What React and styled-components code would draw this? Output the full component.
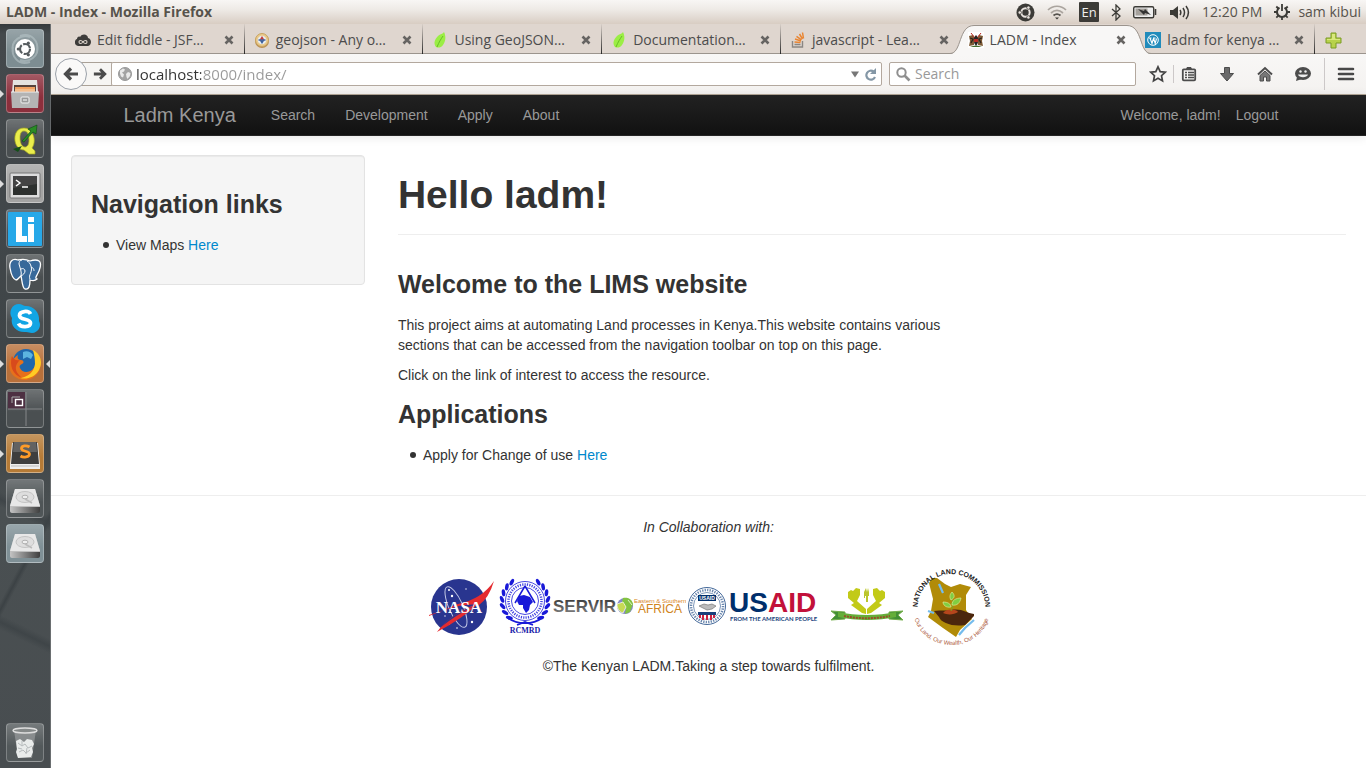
import React from "react";
import styled, { createGlobalStyle, css } from "styled-components";

const GlobalStyle = createGlobalStyle`
  * { box-sizing: border-box; }
  html, body, #root { height: 100%; }
  body {
    margin: 0;
    background: #fff;
    color: #333;
    font-family: "Liberation Sans", Arial, sans-serif;
    font-size: 14px;
    line-height: 20px;
  }
  button { border: 0; padding: 0; background: none; font: inherit; color: inherit; cursor: pointer; }
  svg { display: block; flex: none; }
`;

const uiFont = css`
  font-family: "Open Sans", "Noto Sans", sans-serif;
  font-size: 14px;
`;

/* ---------- desktop shell ---------- */

const Desktop = styled.div`
  min-height: 100%;
  display: flex;
  flex-direction: column;
`;

const Panel = styled.header`
  ${uiFont}
  height: 24px;
  flex: none;
  display: flex;
  align-items: center;
  justify-content: space-between;
  padding: 0 5px 0 6px;
  color: #57534c;
  background: linear-gradient(#f8f6f4, #eeeae6 40%, #d8cdc3);
`;

const WindowTitle = styled.span`
  font-weight: 700;
`;

const Indicators = styled.div`
  display: flex;
  align-items: center;
  gap: 12px;
`;

const Indicator = styled.button`
  display: flex;
  align-items: center;
  gap: 8px;
  white-space: nowrap;
`;

const Language = styled.span`
  width: 20px;
  height: 20px;
  border-radius: 1px;
  background: #3c3b37;
  color: #f2f0ee;
  font-size: 13px;
  line-height: 20px;
  text-align: center;
`;

const Workspace = styled.div`
  flex: 1;
  display: flex;
`;

const Launcher = styled.nav`
  width: 51px;
  flex: none;
  display: flex;
  flex-direction: column;
  gap: 6px;
  padding: 5px 6px;
  border-right: 1px solid #6a6e70;
  background:
    linear-gradient(118deg, transparent 69%, #3c4245 70%, transparent 71%),
    linear-gradient(26deg, transparent 18%, #3f4548 19%, transparent 20%, transparent 34%, #3f4548 35%, transparent 36%),
    linear-gradient(#34393b, #44494c 10px, #3e4447 55%, #4a5052 65%, #484d50);
`;

const Tile = styled.button`
  position: relative;
  width: 38px;
  height: 39px;
  flex: none;
  margin-top: ${(p) => (p.$last ? "auto" : "0")};
  border: 1px solid rgba(255, 255, 255, 0.25);
  border-radius: 4px;
  background: linear-gradient(rgba(255, 255, 255, 0.2), transparent 60%), ${(p) => p.$color};
  display: grid;
  place-items: center;
  &:last-child { margin-bottom: 1px; }
`;

const Pip = styled.span`
  position: absolute;
  top: 15px;
  ${(p) => (p.$right ? "right: -7px; border-right: 4px solid #ddd;" : "left: -7px; border-left: 4px solid #ddd;")}
  border-top: 4px solid transparent;
  border-bottom: 4px solid transparent;
`;

/* ---------- browser chrome ---------- */

const Browser = styled.div`
  flex: 1;
  min-width: 0;
  display: flex;
  flex-direction: column;
`;

const TabStrip = styled.div`
  ${uiFont}
  height: 30px;
  display: flex;
  padding-left: 15px;
  background: #dfd6cf;
  box-shadow: inset 0 -1px #9b948d;
  color: #4c4c4c;
`;

const Tab = styled.div`
  position: relative;
  flex: 1;
  min-width: 0;
  display: flex;
  align-items: center;
  padding: 2px 10px 0 9px;
  gap: 6px;
  ${(p) => !p.$active && !p.$beforeActive && css`
    border-right: 1px solid;
    border-image: linear-gradient(#dfd6cf, #222) 1;
  `}
`;

const TabLabel = styled.button`
  position: relative;
  flex: 1;
  min-width: 0;
  display: flex;
  align-items: center;
  gap: 6px;
  text-align: left;
  white-space: nowrap;
`;

const CloseButton = styled.button`
  position: relative;
  width: 10px;
  height: 10px;
  flex: none;
`;

const TabShape = styled.div`
  position: absolute;
  inset: 1px -15px 0 -9px;
  display: flex;
`;

const TabTop = styled.div`
  flex: 1;
  background: #f8f7f6;
  border-top: 1px solid #9b948d;
`;

const NewTab = styled.button`
  width: 51px;
  padding: 2px 0 0 10px;
`;

const Toolbar = styled.div`
  ${uiFont}
  height: 41px;
  display: flex;
  align-items: center;
  padding: 0 11px 0 4px;
  background: linear-gradient(#f8f7f6, #f4f2f0);
  border-bottom: 1px solid #b3a797;
`;

const BackButton = styled.button`
  position: relative;
  width: 32px;
  height: 32px;
  flex: none;
  display: grid;
  place-items: center;
  border: 1px solid #9ba1a9;
  border-radius: 50%;
  background: #faf9f8;
`;

const ForwardButton = styled.button`
  width: 32px;
  height: 24px;
  flex: none;
  margin-left: -7px;
  padding-left: 12px;
  border: 1px solid #aaa197;
  border-right: 0;
  background: #f6f5f3;
`;

const Field = styled.label`
  height: 24px;
  display: flex;
  align-items: center;
  gap: 4px;
  padding: 0 4px 0 6px;
  border: 1px solid #b3a89e;
  border-radius: 2px;
  background: #fff;
  ${(p) => (p.$wide ? "flex: 1; margin-left: -1px;" : "width: 247px; margin: 0 13px 0 7px;")}
`;

const TextInput = styled.input`
  flex: 1;
  min-width: 0;
  border: 0;
  padding: 0;
  outline: 0;
  background: transparent;
  font: inherit;
  color: #888;
  &::placeholder { color: #999; opacity: 1; }
`;

const AddressInput = styled(TextInput)`
  font-size: 15px;
  background: linear-gradient(to right, #333 65px, #999 65px);
  background-clip: text;
  -webkit-background-clip: text;
  color: transparent;
`;

const Tools = styled.div`
  display: flex;
  align-items: center;
  gap: 20px;
`;

const ToolButton = styled.button`
  width: 18px;
  height: 18px;
  display: grid;
  place-items: center;
`;

const Divider = styled.span`
  width: 1px;
  height: ${(p) => (p.$tall ? "32px" : "18px")};
  margin: 0 ${(p) => (p.$tall ? "-8px" : "-14px")};
  background: #ccc8c8;
`;

/* ---------- web page ---------- */

const Page = styled.div`
  flex: 1;
  background: #fff;
`;

const Navbar = styled.nav`
  height: 41px;
  border-bottom: 1px solid #252525;
  background: linear-gradient(#222, #111);
  box-shadow: 0 1px 10px rgba(0, 0, 0, 0.1);
`;

const NavInner = styled.div`
  max-width: 1170px;
  height: 40px;
  margin: 0 auto;
  display: flex;
  align-items: center;
`;

const NavLink = styled.a`
  padding: 0 15px;
  color: #999;
  text-decoration: none;
`;

const Brand = styled(NavLink)`
  padding: 0 20px 0 0;
  font-size: 20px;
`;

const Account = styled.div`
  margin-left: auto;
  display: flex;
  color: #999;
`;

const Columns = styled.div`
  display: grid;
  grid-template-columns: 31fr 100fr;
  gap: 33px;
  align-items: start;
  padding: 19px 20px 0;
`;

const Well = styled.aside`
  padding: 19px;
  border: 1px solid #e3e3e3;
  border-radius: 4px;
  background: #f5f5f5;
  box-shadow: inset 0 1px 1px rgba(0, 0, 0, 0.05);
`;

const Main = styled.main`
  padding-top: 20px;
`;

const PageHeader = styled.header`
  padding-bottom: 19px;
  border-bottom: 1px solid #eee;
  margin-bottom: 30px;
`;

const Title = styled.h1`
  margin: 0;
  font-size: 39px;
  line-height: 40px;
`;

const Heading = styled.h2`
  margin: 10px 0 12px;
  font-size: 25px;
  line-height: 38px;
`;

const Copy = styled.p`
  max-width: 60%;
  margin: 0 0 10px;
`;

const List = styled.ul`
  margin: 0 0 10px 12px;
  padding: 0;
  list-style: none;
`;

const ListItem = styled.li`
  display: flex;
  align-items: center;
  gap: 7px;
  &::before {
    content: "";
    width: 6px;
    height: 6px;
    border-radius: 50%;
    background: #333;
  }
`;

const Link = styled.a`
  color: #08c;
  text-decoration: none;
`;

const Footer = styled.footer`
  margin-top: 20px;
  padding-top: 21px;
  border-top: 1px solid #eee;
  text-align: center;
`;

const Partners = styled.p`
  margin: 0 0 30px;
  font-style: italic;
`;

const Logos = styled.div`
  display: flex;
  justify-content: center;
  margin-bottom: 9px;
`;

const Copyright = styled.p`
  margin: 0;
`;

/* ---------- icons ---------- */

const DashIcon = () => (
  <svg width="34" height="34" viewBox="0 0 34 34">
    <g fill="none" stroke="#b8c4c8" strokeWidth="2" opacity=".6">
      <path d="M5 20C2 8 14 2 22 5M12 4c12-4 19 6 17 15M29 13c3 12-9 18-17 15M22 30C10 34 3 24 5 15" />
    </g>
    <circle cx="17" cy="17" r="10" fill="#fff" />
    <circle cx="17" cy="17" r="5" fill="none" stroke="#555b5e" strokeWidth="2.2" strokeDasharray="9 1.5" />
    <circle cx="10.300" cy="17" r="1.600" fill="#555b5e" />
    <circle cx="20.300" cy="11.200" r="1.600" fill="#555b5e" />
    <circle cx="20.300" cy="22.800" r="1.600" fill="#555b5e" />
  </svg>
);

const FilesIcon = () => (
  <svg width="34" height="34" viewBox="0 0 34 34">
    <path d="M5 3h24l1 12H4z" fill="#e4e2e0" />
    <path d="M6 8h22v8H6z" fill="#55423b" />
    <path d="M7 10h20v6H7z" fill="#f0a162" />
    <path d="M7 13h20" stroke="#f9d9b2" />
    <path d="M3 15h28l-1 16H4z" fill="#b4b4b4" />
    <path d="M3 15h28" stroke="#eee" />
    <rect x="13" y="20" width="8" height="6" rx="1" fill="#999" stroke="#f2f2f2" />
    <path d="M15 23h4" stroke="#fff" />
  </svg>
);

const QgisIcon = () => (
  <svg width="34" height="34" viewBox="0 0 34 34">
    <path fillRule="evenodd" d="M16 6c-7 0-10 6-9 13 1 6 5 9 9 9l5 4h6v-3l-3-3c3-4 3-11 0-15-2-3-4-5-8-5zm0 3c4 0 5 5 5 9 0 5-2 7-4 7-3 0-5-4-5-9 0-4 1-7 4-7z" fill="#eaed4c" stroke="#a6aa20" strokeWidth=".7" />
    <path d="M14 19l9-10-3-2 9-4-1 9-3-2-9 10z" fill="#2a8c26" stroke="#0d4b12" strokeWidth=".6" />
    <path d="M5 27l9-3-4 6z" fill="#145018" />
  </svg>
);

const TerminalIcon = () => (
  <svg width="34" height="34" viewBox="0 0 34 34">
    <rect x="2" y="6" width="30" height="25" rx="1" fill="#ddd" stroke="#777" />
    <rect x="5" y="9" width="24" height="19" fill="#2d302e" />
    <path d="M5 9h24v8L5 21z" fill="#444" />
    <path d="M8 13l4 3-4 3M14 20h6" fill="none" stroke="#fff" strokeWidth="1.500" />
  </svg>
);

const LiIcon = () => (
  <svg width="34" height="34" viewBox="0 0 34 34">
    <rect width="34" height="34" rx="1" fill="#27a8e8" />
    <path d="M8 5h6v19h5v6H8zM20 12h6v18h-6zM20 5h6v5h-6z" fill="#fff" />
  </svg>
);

const PostgresIcon = () => (
  <svg width="34" height="34" viewBox="0 0 34 34">
    <path d="M10 3C4 1 1 5 2 11c1 6 3 11 6 12 2 0 3-3 5-4 1 3 1 12 4 13 4 1 5-3 5-9 3 1 6 0 7-1-2-1-1-2 0-4 3-5 5-12 2-14-3-2-6-1-9 0-4-2-8-2-12-1z" fill="#38699a" stroke="#fff" strokeWidth="1.300" />
    <path d="M13 19c1-4-1-8-2-12 0-2 1-4 3-4M22 22c-2-4 3-7 1-13-1-3-2-4-4-5M13 12c2-1 4 0 4 2s-2 4-4 5M23 11c2-1 3 1 3 3" fill="none" stroke="#fff" />
  </svg>
);

const SkypeIcon = () => (
  <svg width="34" height="34" viewBox="0 0 34 34">
    <path d="M11 2c3 0 4 2 7 2 8 0 14 7 13 15 3 5-1 12-7 12-3 0-3-1-6-1C9 31 2 24 4 16 0 10 4 2 11 2z" fill="#12a5e4" />
    <path d="M22.500 12c-2-4-11-3-11 1.500 0 5 11 2.500 11 7.500 0 4.500-10 5-12 .5" fill="none" stroke="#fff" strokeWidth="3.800" />
  </svg>
);

const FirefoxIcon = () => (
  <svg width="34" height="34" viewBox="0 0 34 34">
    <circle cx="18" cy="15" r="13" fill="#1f67ac" />
    <path d="M15 5c4-2 8 0 10 3l-2 4-4-2-4 2z" fill="#5cb4df" />
    <path d="M27 6c6 6 7 14 3 20-5 7-14 9-21 5-8-4-10-14-5-22l1 4c1-2 3-4 5-5-1 3 0 5 3 5 2 0 4 2 1 4-2 1-3 2-2 4 2 5 9 5 13 1 4-4 4-10 2-16z" fill="#e6701b" />
    <path d="M25 3c8 4 10 13 6 20-4 7-12 10-19 8 8-1 14-6 15-14 0-6-1-10-2-14z" fill="#ffcb24" />
    <path d="M4 9c-3 10 1 19 10 22-4-4-7-7-6-12 1-3 2-4 4-6-4 1-7-1-8-4z" fill="#d84a1c" />
  </svg>
);

const WorkspaceIcon = () => (
  <svg width="36" height="37" viewBox="0 0 36 37">
    <path d="M1 2h17v17H1z" fill="#4d3042" />
    <path d="M19 2v34M1 19h34" stroke="#85888a" />
    <path d="M5 13V7h8" fill="none" stroke="#aaa" />
    <rect x="8.500" y="9.500" width="7" height="6" fill="none" stroke="#fff" strokeWidth="1.400" />
  </svg>
);

const SublimeIcon = () => (
  <svg width="34" height="34" viewBox="0 0 34 34">
    <path d="M4 6h26l2 22v4H2v-4z" fill="#eee" />
    <path d="M5 5h24l2 22H3z" fill="#3e3e3e" />
    <path d="M6 5h22l1 10H5z" fill="#626262" />
    <path d="M3 29h28" stroke="#bbb" />
    <path d="M21.500 10c-3-2-8-1.500-8 1.500 0 3.500 8 2 8 5.500 0 3-6 4-9 2" fill="none" stroke="#ff9b28" strokeWidth="2.800" />
  </svg>
);

const DiskIcon = () => (
  <svg width="34" height="34" viewBox="0 0 34 34">
    <defs>
      <linearGradient id="disk-front"><stop stopColor="#c4c4c4" /><stop offset="1" stopColor="#3f3f3f" /></linearGradient>
    </defs>
    <path d="M7 7h20l5 17v5H2v-5z" fill="#bfbfbf" />
    <path d="M7 7h20l5 17H2z" fill="#e8e8e8" />
    <path d="M2 25h30v4c0 1-1 2-2 2H4c-1 0-2-1-2-2z" fill="url(#disk-front)" />
    <ellipse cx="17" cy="15" rx="9" ry="5.500" fill="#dedede" stroke="#c4c4c4" />
    <ellipse cx="17" cy="15" rx="3" ry="1.800" fill="#efefef" stroke="#b0b0b0" />
    <path d="M17 17l7 4" stroke="#bbb" strokeWidth="1.500" />
  </svg>
);

const TrashIcon = () => (
  <svg width="34" height="34" viewBox="0 0 34 34">
    <path d="M6 4h22l-4 28H10z" fill="#9ca0a1" opacity=".65" />
    <ellipse cx="17" cy="4.500" rx="12" ry="2.500" fill="#858989" stroke="#ddd" strokeWidth="1.400" />
    <path d="M8 15l4-2 4 3 3-3 5 1 2 4-2 4 1 4-2 5-13 1-2-6 1-3z" fill="#e9eceb" />
    <path d="M10 17l4 3 3-2 3 4 4-2M11 26l4-2 3 3 4-3M14 15v4M19 22l-1 6M10 22l4 1" stroke="#b5babb" fill="none" />
  </svg>
);

const apps = [
  { name: "Dash", Icon: DashIcon, color: "#7d8d92" },
  { name: "Files", Icon: FilesIcon, color: "#8c2f3c", open: true },
  { name: "QGIS", Icon: QgisIcon, color: "#4a4f51" },
  { name: "Terminal", Icon: TerminalIcon, color: "#a3a3a2", open: true },
  { name: "LibreCAD", Icon: LiIcon, color: "#46525a" },
  { name: "pgAdmin", Icon: PostgresIcon, color: "#4a4f51" },
  { name: "Skype", Icon: SkypeIcon, color: "#4a4f51" },
  { name: "Firefox", Icon: FirefoxIcon, color: "#b8703a", open: true, focused: true },
  { name: "Workspace Switcher", Icon: WorkspaceIcon, color: "#4a4f51" },
  { name: "Sublime Text", Icon: SublimeIcon, color: "#b67b36", open: true },
  { name: "Disk 1", Icon: DiskIcon, color: "#4f5557" },
  { name: "Disk 2", Icon: DiskIcon, color: "#7f9096" },
  { name: "Trash", Icon: TrashIcon, color: "#53595b", last: true },
];

const FriendsIcon = () => (
  <svg width="19" height="19" viewBox="0 0 19 19">
    <circle cx="9.500" cy="9.500" r="9" fill="#3c3b37" />
    <circle cx="9.500" cy="9.500" r="4.200" fill="none" stroke="#e9e4df" strokeWidth="2" />
    <g fill="#e9e4df" stroke="#3c3b37" strokeWidth=".7"><circle cx="3.800" cy="9.500" r="1.700" /><circle cx="12.400" cy="4.600" r="1.700" /><circle cx="12.400" cy="14.400" r="1.700" /></g>
  </svg>
);

const WifiIcon = () => (
  <svg width="20" height="16" viewBox="0 0 20 16" fill="none" strokeWidth="1.700">
    <path d="M1 6c5-5 13-5 18 0M4 9c4-3.500 8-3.500 12 0" stroke="#aaa49e" />
    <path d="M6.500 11.500c2-1.700 5-1.700 7 0" stroke="#55524d" />
    <path d="M8 13.500h4l-2 2z" fill="#3c3b37" />
  </svg>
);

const BluetoothIcon = () => (
  <svg width="10" height="17" viewBox="0 0 10 17"><path d="M1 5l8 7-4 4V1l4 4-8 7" fill="none" stroke="#3c3b37" strokeWidth="1.300" /></svg>
);

const BatteryIcon = () => (
  <svg width="24" height="14" viewBox="0 0 24 14">
    <rect x=".7" y="1.700" width="20" height="11" rx="1.500" fill="#eee" stroke="#3c3b37" strokeWidth="1.400" />
    <path d="M22.500 4v6" stroke="#3c3b37" strokeWidth="1.600" />
    <path d="M2.500 3.500h12v7h-12z" fill="#a5a19c" />
    <path d="M5 4l6 2 1-2 6 6-6-2-1 2z" fill="#333" />
  </svg>
);

const VolumeIcon = () => (
  <svg width="21" height="15" viewBox="0 0 21 15">
    <path d="M1 5h3l5-4v13l-5-4H1z" fill="#3c3b37" />
    <path d="M11 5c1 1.500 1 3.500 0 5M14 3c2 3 2 6 0 9M17 1c3 4 3 9 0 13" fill="none" stroke="#3c3b37" strokeWidth="1.500" />
  </svg>
);

const PowerGearIcon = () => (
  <svg width="16" height="16" viewBox="0 0 16 16" fill="none" stroke="#3c3b37">
    <path d="M5.500 3.700a5 5 0 1 0 5 0" strokeWidth="2" />
    <path d="M8 0v7M0 8h3M13 8h3M2.300 2.500l2 2M13.700 2.500l-2 2M2.300 13.700l2-2M13.700 13.700l-2-2M8 13v3" strokeWidth="1.800" />
  </svg>
);

const CloseIcon = () => (
  <svg width="10" height="10" viewBox="0 0 10 10"><path d="M1.500 1.500l7 7m0-7l-7 7" stroke="#666462" strokeWidth="2.600" /></svg>
);

const FiddleFavicon = () => (
  <svg width="16" height="16" viewBox="0 0 16 16">
    <path d="M3 14c-4-1-4-6-1-7 0-2 2-3 3-2 2-4 8-3 8 1 4 1 4 7 0 8z" fill="#3d3c3a" />
    <path d="M8 10c-1.500-2-4-2-4 0s2.500 2 4 0c1.500-2 4-2 4 0s-2.500 2-4 0z" fill="none" stroke="#e0d8d0" strokeWidth="1.100" />
  </svg>
);

const CompassFavicon = () => (
  <svg width="16" height="16" viewBox="0 0 16 16">
    <circle cx="8" cy="9" r="7" fill="#b98f52" />
    <circle cx="8" cy="8" r="6.500" fill="#e9c98b" stroke="#c9a462" />
    <circle cx="8" cy="8" r="4.300" fill="#e7edf1" />
    <path d="M8 4l2.500 4h-5z" fill="#c33a3a" /><path d="M8 12l2.500-4h-5z" fill="#3c5f99" />
    <path d="M4.500 8h7" stroke="#4a69a0" strokeWidth="1.500" />
  </svg>
);

const LeafFavicon = () => (
  <svg width="16" height="16" viewBox="0 0 16 16">
    <path d="M12 0c2 4 2 9-1 13-2 3-5 3-7 2C1 11 3 7 6 4c2-2 5-2 6-4z" fill="#9bee45" />
    <path d="M11 4c-2 3-4 6-6 11" fill="none" stroke="#67be25" />
  </svg>
);

const StackFavicon = () => (
  <svg width="16" height="16" viewBox="0 0 16 16" fill="none">
    <path d="M2.500 9v6h10V9" stroke="#8a8683" strokeWidth="1.400" />
    <path d="M4.500 12.500h6" stroke="#8a8683" strokeWidth="1.500" />
    <path d="M4.500 10l6 .6M5 7l6 2M6.500 4.300l5 3.500M9.500 2l3 5M12.500.5l1 6" stroke="#e98532" strokeWidth="1.500" />
  </svg>
);

const KenyaFavicon = () => (
  <svg width="16" height="16" viewBox="0 0 16 16">
    <path d="M0 0h16v16H0z" fill="#fff" />
    <path d="M1 4l4-1 2 4-1 6-5 1 1-5zM15 4l-4-1-2 4 1 6 5 1-1-5z" fill="#7d5a35" />
    <path d="M2 6l3 1-2 4M14 6l-3 1 2 4" stroke="#2b211b" fill="none" strokeWidth="1.200" />
    <path d="M3 1l4 5M13 1L9 6" stroke="#b9271f" />
    <path d="M8 3c3 3 3 7 0 11-3-4-3-8 0-11z" fill="#252525" />
    <path d="M6 7h4v3H6z" fill="#b72a24" />
    <path d="M2 15c4-2 8-2 12 0z" fill="#426c2b" />
  </svg>
);

const WordPressFavicon = () => (
  <svg width="16" height="16" viewBox="0 0 16 16">
    <path d="M0 0h16v16H0z" fill="#218bbb" />
    <circle cx="8" cy="8" r="5.300" fill="none" stroke="#fff" />
    <path d="M4 6h2.500M8 6h2.500M5 6l2 5.500 1.300-4.500M8.500 6l1.700 5.500L11.500 6.500" fill="none" stroke="#fff" strokeWidth="1.100" />
  </svg>
);

const tabs = [
  { title: "Edit fiddle - JSF…", Icon: FiddleFavicon },
  { title: "geojson - Any o…", Icon: CompassFavicon },
  { title: "Using GeoJSON…", Icon: LeafFavicon },
  { title: "Documentation…", Icon: LeafFavicon },
  { title: "javascript - Lea…", Icon: StackFavicon, beforeActive: true },
  { title: "LADM - Index", Icon: KenyaFavicon, active: true },
  { title: "ladm for kenya …", Icon: WordPressFavicon },
];

const ArrowIcon = ({ size, flip }) => (
  <svg width={size} height={size} viewBox="0 0 16 16">
    <path d={flip ? "M1 8h12M8 2.500L13.500 8 8 13.500" : "M15 8H3M8 2.500L2.500 8 8 13.500"} fill="none" stroke="#4b4b4b" strokeWidth="3.200" />
  </svg>
);

const GlobeIcon = () => (
  <svg width="14" height="14" viewBox="0 0 14 14">
    <circle cx="7" cy="7" r="6.500" fill="#a3a3a3" stroke="#999" />
    <path d="M2 3.500l3-2 2 1-1 2-2 1 2 2-1 3-2-1-1-3zM8 7l2-2 2.500 1-.5 3-2.500 3-1-2z" fill="#e9e9e9" />
  </svg>
);

const DropIcon = () => (
  <svg width="10" height="8" viewBox="0 0 10 8"><path d="M1 1.500h8L5 7.500z" fill="#777" /></svg>
);

const ReloadIcon = () => (
  <svg width="13" height="13" viewBox="0 0 13 13">
    <path d="M9.500 3.500A4.500 4.500 0 1 0 11 9" fill="none" stroke="#8497a6" strokeWidth="2.200" />
    <path d="M12 0v6H6z" fill="#8497a6" />
  </svg>
);

const SearchIcon = () => (
  <svg width="15" height="15" viewBox="0 0 15 15" fill="none" stroke="#8f8f8f"><circle cx="5.500" cy="5.500" r="4.200" strokeWidth="2" /><path d="M8.500 8.500l5 5" strokeWidth="2.600" /></svg>
);

const StarIcon = () => (
  <svg width="18" height="18" viewBox="0 0 18 18"><path d="M9 1.800l2.200 4.800 5 .6-3.700 3.500 1 5.200L9 13.300l-4.500 2.600 1-5.200L1.800 7.200l5-.6z" fill="none" stroke="#444" strokeWidth="1.700" /></svg>
);

const BookmarksIcon = () => (
  <svg width="16" height="16" viewBox="0 0 16 16"><rect x="1.800" y="3.300" width="12.400" height="11" rx="1" fill="none" stroke="#4c4c4c" strokeWidth="1.800" /><path d="M5 3l1-2h4l1 2z" fill="#4c4c4c" /><path d="M4 6.500h2M7 6.500h6M4 9h2M7 9h6M4 11.500h2M7 11.500h6" stroke="#4c4c4c" strokeWidth="1.300" /></svg>
);

const DownloadIcon = () => (
  <svg width="16" height="16" viewBox="0 0 16 16"><path d="M5.500 1.500h5v6h4L8 15 1.500 7.500h4z" fill="#6a6a6a" stroke="#4c4c4c" /></svg>
);

const HomeIcon = () => (
  <svg width="16" height="16" viewBox="0 0 16 16"><path d="M1 8.500L8 2l7 6.500" fill="none" stroke="#4c4c4c" strokeWidth="2" /><path d="M3 9.500L8 5l5 4.500V15H9.500v-4h-3v4H3z" fill="#777" stroke="#4c4c4c" /></svg>
);

const HelloIcon = () => (
  <svg width="18" height="16" viewBox="0 0 18 16"><ellipse cx="9" cy="7.500" rx="8" ry="6.500" fill="#4c4c4c" /><path d="M3 11l-1 4 6-2z" fill="#4c4c4c" /><circle cx="6.500" cy="5.500" r="1.200" fill="#eee" /><circle cx="11.500" cy="5.500" r="1.200" fill="#eee" /><path d="M4 8.500h10c-1 3.500-9 3.500-10 0z" fill="#eee" /></svg>
);

const MenuIcon = () => (
  <svg width="18" height="14" viewBox="0 0 18 14"><path d="M2 2h14M2 7h14M2 12h14" stroke="#484848" strokeWidth="2.600" strokeLinecap="round" /></svg>
);

const PlusIcon = () => (
  <svg width="17" height="17" viewBox="0 0 17 17"><path d="M6 1h5v5h5v5h-5v5H6v-5H1V6h5z" fill="#b8d24c" stroke="#7b9b25" /><path d="M7 2h3v5h5v1H2V7h5z" fill="#d9e87e" /></svg>
);

/* ---------- partner logos ---------- */

const NasaLogo = () => (
  <svg width="75" height="80" viewBox="423 567 75 80" role="img" aria-label="NASA">
    <circle cx="459" cy="607" r="28" fill="#29358f" />
    <g fill="#fff"><circle cx="449" cy="590" r="1" /><circle cx="452" cy="596" r="1.200" /><circle cx="466" cy="589" r=".7" /><circle cx="472" cy="622" r="1.200" /><circle cx="449" cy="624" r="1" /><circle cx="457" cy="628" r=".8" /><circle cx="445" cy="616" r=".7" /><circle cx="479" cy="598" r=".7" /></g>
    <ellipse cx="456" cy="607" rx="7" ry="22" transform="rotate(-24 456 607)" fill="none" stroke="#c3c9e6" />
    <path d="M429 615Q444 611 458 604Q482 599 494 581Q489 598 479 605Q462 602 429 616z" fill="#e52b2f" />
    <path d="M437 632Q450 614 479 603Q462 619 437 632z" fill="#e52b2f" />
    <path d="M441 627Q452 614 474 606Q456 615 441 627z" fill="#29358f" />
    <text x="459" y="613" textAnchor="middle" fontFamily="Liberation Serif, serif" fontWeight="700" fontSize="17" fill="#fff">NASA</text>
  </svg>
);

const wreathAngles = [-55, -38, -21, -4, 13, 30, 47];

const RcmrdLogo = () => (
  <svg width="55" height="80" viewBox="498 567 55 80" role="img" aria-label="RCMRD">
    <g fill="#1919d8">
      {wreathAngles.map((a) => (
        <g key={a}>
          <ellipse cx="548" cy="601" rx="1.800" ry="3.600" transform={`rotate(${a} 525 601) rotate(28 548 601)`} />
          <ellipse cx="502" cy="601" rx="1.800" ry="3.600" transform={`rotate(${-a} 525 601) rotate(-28 502 601)`} />
        </g>
      ))}
    </g>
    <g fill="none" stroke="#1919d8">
      <circle cx="525" cy="601" r="19.500" strokeWidth=".8" fill="#fff" />
      <circle cx="525" cy="601" r="16.500" strokeWidth="2.500" strokeDasharray="1.200 1.200" opacity=".8" />
      <circle cx="525" cy="601" r="13.500" strokeWidth=".8" />
      <path d="M525 586l-10 17M525 586l10 17" strokeWidth="1.500" />
      <path d="M508 618c9 7 25 7 34 0M517 625l8-3 8 3" strokeWidth="1.700" />
    </g>
    <path d="M519 596l5-1 6 2 3 5-3 3-1 5-3 3-3-5v-3h-4l-2-4z" fill="#1919d8" />
    <text x="525" y="633" textAnchor="middle" fontFamily="Liberation Serif, serif" fontWeight="700" fontSize="8" fill="#1717a8">RCMRD</text>
  </svg>
);

const ServirLogo = () => (
  <svg width="133" height="80" viewBox="553 567 133 80" role="img" aria-label="SERVIR Eastern and Southern Africa">
    <defs><linearGradient id="steel" x2="0" y2="1"><stop stopColor="#333" /><stop offset="1" stopColor="#888" /></linearGradient></defs>
    <text x="553" y="612" fontFamily="Liberation Sans, sans-serif" fontWeight="700" fontSize="17" fill="url(#steel)">SERVIR</text>
    <circle cx="625" cy="606" r="8" fill="#8487c7" />
    <path d="M623 598c6-1 9 2 10 6l-3 8-5 2 1-6-5-2 1-4z" fill="#83c341" />
    <path d="M617 604l6-2 3 5-3 6c-4-1-6-5-6-9zM628 600l4 5" fill="#c6da55" stroke="#fff" strokeWidth=".7" />
    <text x="634" y="603" fontFamily="Liberation Sans, sans-serif" fontSize="6" fill="#d9851c">Eastern &amp; Southern</text>
    <text x="638" y="613" fontFamily="Liberation Sans, sans-serif" fontSize="12" fill="#d08420">AFRICA</text>
  </svg>
);

const UsaidLogo = () => (
  <svg width="136" height="80" viewBox="686 567 136 80" role="img" aria-label="USAID from the American people">
    <circle cx="707" cy="606" r="18.500" fill="#fff" stroke="#44699a" strokeWidth="1" />
    <circle cx="707" cy="606" r="16" fill="none" stroke="#6986ad" strokeWidth="2.500" strokeDasharray="1.300 1.200" />
    <circle cx="707" cy="606" r="13.500" fill="#fff" stroke="#44699a" strokeWidth=".7" />
    <path d="M698 595h18v6h-18z" fill="#002f6c" />
    <text x="707" y="600" textAnchor="middle" fontFamily="Liberation Sans, sans-serif" fontWeight="700" fontSize="5" fill="#fff">USAID</text>
    <path d="M699 606l5-2 4 1 4-1 4 2-4 3-5 1-4-2z" fill="#bbb" stroke="#777" strokeWidth=".7" />
    <path d="M698 612h18v3h-18z" fill="#173f7c" />
    <path d="M700 615v3M703 615v5M707 615v5M711 615v5M714 615v3" stroke="#cc2442" strokeWidth="2" />
    <text x="729" y="612" fontFamily="Liberation Sans, sans-serif" fontWeight="700" fontSize="28" fill="#002f6c">US<tspan fill="#c2113a">AID</tspan></text>
    <text x="730" y="621" fontFamily="Lato, sans-serif" fontWeight="700" fontSize="6" fill="#173f7c">FROM THE AMERICAN PEOPLE</text>
  </svg>
);

const UniversityLogo = () => (
  <svg width="86" height="80" viewBox="822 567 86 80" role="img" aria-label="University emblem">
    <path d="M848 592l3-2 2 1 3-3 4 1v6l-3 6 9 8v5l-4-1-11-8 3-2-6-5z" fill="#c2ca18" />
    <path d="M885 592l-3-2-2 1-3-3-4 1v6l3 6-9 8v5l4-1 11-8-3-2 6-5z" fill="#c2ca18" />
    <path d="M864 598v-6l2-4 1 4v10h-1v-6h-1v2zM869 598v-6l-1-4-1 4v10h1v-6h1z" fill="#bbc62d" />
    <path d="M831 611l14 1v7l-14 1 5-5zM903 611l-14 1v7l14 1-5-5z" fill="#438f35" stroke="#72ae49" />
    <path d="M838 612c18 4 40 4 58 0v5c-18 4-40 4-58 0z" fill="#65ae39" />
    <path d="M844 616c15 3 31 3 46 0" fill="none" stroke="#994d27" strokeWidth="2" strokeDasharray="2 1" />
  </svg>
);

const LandCommissionLogo = () => (
  <svg width="86" height="80" viewBox="908 567 86 80" role="img" aria-label="National Land Commission">
    <defs>
      <path id="nlc-top" d="M919 618A34 34 0 1 1 984 618" />
      <path id="nlc-bottom" d="M913 609a38.500 36 0 0 0 77 0" />
    </defs>
    <path d="M929 583l3-5 5 0 8 6 6 3 9-3 11 3-5 8v15l6 9-12 11-4 7-13-9-15-11 3-6 2-12z" fill="#b18b08" />
    <path d="M939 584l4 9M928 611l6 2M974 620l-9 8-6 7" fill="none" stroke="#74bced" strokeWidth="2.200" />
    <path d="M934 611c7-1 13 0 17-1 11-2 15 3 23 4v2l-9 9c-12 2-24-2-26-8z" fill="#4b260d" />
    <path d="M943 613c3-5 14-4 15-1-4 3-11 3-15 1z" fill="#b6461c" />
    <path d="M951 611c3-6 2-10 0-14M951 604l5-5" fill="none" stroke="#7ba71f" />
    <path d="M951 607c-5 1-8-2-8-5 5 0 8 2 8 5zM951 600c-2-3-1-6 1-8 3 3 3 6-1 8zM952 605c0-5 4-7 9-7-1 5-4 8-9 7z" fill="#80ce42" stroke="#e5f2a2" strokeWidth=".6" />
    <g fontFamily="Liberation Sans, sans-serif">
      <text fontWeight="700" fontSize="7" fill="#222"><textPath href="#nlc-top" startOffset="50%" textAnchor="middle">NATIONAL LAND COMMISSION</textPath></text>
      <text fontSize="6" fill="#ad5b3e"><textPath href="#nlc-bottom" startOffset="50%" textAnchor="middle">Our Land, Our Wealth, Our Heritage</textPath></text>
    </g>
  </svg>
);

export default function App() {
  return (
    <Desktop>
      <GlobalStyle />
      <Panel>
        <WindowTitle>LADM - Index - Mozilla Firefox</WindowTitle>
        <Indicators>
          <Indicator aria-label="Ubuntu"><FriendsIcon /></Indicator>
          <Indicator aria-label="Network"><WifiIcon /></Indicator>
          <Indicator><Language>En</Language></Indicator>
          <Indicator aria-label="Bluetooth"><BluetoothIcon /></Indicator>
          <Indicator aria-label="Battery"><BatteryIcon /></Indicator>
          <Indicator aria-label="Volume"><VolumeIcon /></Indicator>
          <Indicator>12:20 PM</Indicator>
          <Indicator><PowerGearIcon />sam kibui</Indicator>
        </Indicators>
      </Panel>
      <Workspace>
        <Launcher aria-label="Launcher">
          {apps.map(({ name, Icon, color, open, focused, last }) => (
            <Tile key={name} aria-label={name} $color={color} $last={last}>
              {open && <Pip />}
              <Icon />
              {focused && <Pip $right />}
            </Tile>
          ))}
        </Launcher>
        <Browser>
          <TabStrip>
            {tabs.map(({ title, Icon, active, beforeActive }) => (
              <Tab key={title} $active={active} $beforeActive={beforeActive}>
                {active && (
                  <TabShape>
                    <svg width="24" height="29" viewBox="0 0 24 29">
                      <path d="M0 29C12 29 8 .5 24 .5V29z" fill="#f8f7f6" />
                      <path d="M0 28.500C12 28.500 8 .5 24 .5" fill="none" stroke="#9b948d" />
                    </svg>
                    <TabTop />
                    <svg width="24" height="29" viewBox="0 0 24 29">
                      <path d="M24 29C12 29 16 .5 0 .5V29z" fill="#f8f7f6" />
                      <path d="M24 28.500C12 28.500 16 .5 0 .5" fill="none" stroke="#9b948d" />
                    </svg>
                  </TabShape>
                )}
                <TabLabel><Icon />{title}</TabLabel>
                <CloseButton aria-label={`Close ${title}`}><CloseIcon /></CloseButton>
              </Tab>
            ))}
            <NewTab aria-label="New tab"><PlusIcon /></NewTab>
          </TabStrip>
          <Toolbar>
            <BackButton aria-label="Back"><ArrowIcon size={16} /></BackButton>
            <ForwardButton aria-label="Forward"><ArrowIcon size={14} flip /></ForwardButton>
            <Field $wide>
              <GlobeIcon />
              <AddressInput aria-label="Address" defaultValue="localhost:8000/index/" />
              <DropIcon />
              <ReloadIcon />
            </Field>
            <Field>
              <SearchIcon />
              <TextInput aria-label="Search the web" placeholder="Search" />
            </Field>
            <Tools>
              <ToolButton aria-label="Bookmark"><StarIcon /></ToolButton>
              <Divider />
              <ToolButton aria-label="Bookmarks"><BookmarksIcon /></ToolButton>
              <ToolButton aria-label="Downloads"><DownloadIcon /></ToolButton>
              <ToolButton aria-label="Home"><HomeIcon /></ToolButton>
              <ToolButton aria-label="Hello"><HelloIcon /></ToolButton>
              <Divider $tall />
              <ToolButton aria-label="Menu"><MenuIcon /></ToolButton>
            </Tools>
          </Toolbar>
          <Page>
            <Navbar>
              <NavInner>
                <Brand href="#">Ladm Kenya</Brand>
                <NavLink href="#search">Search</NavLink>
                <NavLink href="#development">Development</NavLink>
                <NavLink href="#apply">Apply</NavLink>
                <NavLink href="#about">About</NavLink>
                <Account>
                  <span>Welcome, ladm!</span>
                  <NavLink href="#logout">Logout</NavLink>
                </Account>
              </NavInner>
            </Navbar>
            <Columns>
              <Well>
                <Heading>Navigation links</Heading>
                <List>
                  <ListItem><span>View Maps <Link href="#maps">Here</Link></span></ListItem>
                </List>
              </Well>
              <Main>
                <PageHeader><Title>Hello ladm!</Title></PageHeader>
                <Heading>Welcome to the LIMS website</Heading>
                <Copy>This project aims at automating Land processes in Kenya.This website contains various sections that can be accessed from the navigation toolbar on top on this page.</Copy>
                <Copy>Click on the link of interest to access the resource.</Copy>
                <Heading>Applications</Heading>
                <List>
                  <ListItem><span>Apply for Change of use <Link href="#change">Here</Link></span></ListItem>
                </List>
              </Main>
            </Columns>
            <Footer>
              <Partners>In Collaboration with:</Partners>
              <Logos>
                <NasaLogo />
                <RcmrdLogo />
                <ServirLogo />
                <UsaidLogo />
                <UniversityLogo />
                <LandCommissionLogo />
              </Logos>
              <Copyright>©The Kenyan LADM.Taking a step towards fulfilment.</Copyright>
            </Footer>
          </Page>
        </Browser>
      </Workspace>
    </Desktop>
  );
}
